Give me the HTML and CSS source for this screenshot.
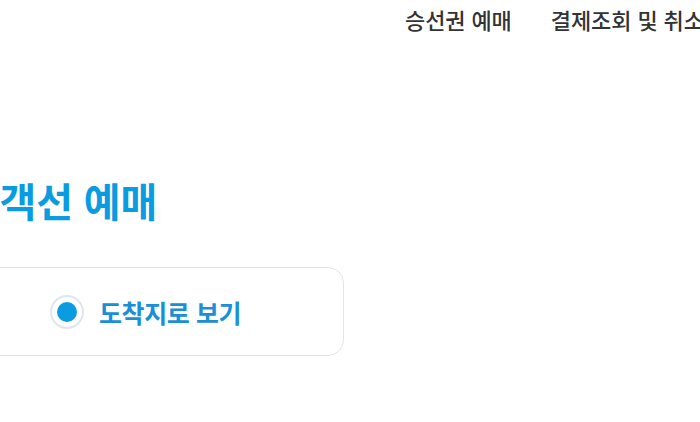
FILE: index.html
```html
<!DOCTYPE html>
<html lang="ko">
<head>
  <meta charset="UTF-8">
  <meta name="viewport" content="width=device-width, initial-scale=1.0">
  <title>여객선 예매</title>
  <link rel="stylesheet" href="styles.css">
</head>
<body>
  <header class="top">
    <nav class="gnb">
      <a href="#">승선권 예매</a>
      <a href="#">결제조회 및 취소</a>
    </nav>
  </header>

  <main class="content">
    <h1 class="title">여객선 예매</h1>

    <div class="view-box">
      <label class="radio">
        <input type="radio" name="view" checked>
        <span class="dot"></span>
        <span class="label">도착지로 보기</span>
      </label>
    </div>
  </main>
</body>
</html>
```

FILE: styles.css
```css
body { margin: 0; padding: 0; background: #fff; font-family: "Noto Sans CJK KR", "Noto Sans", sans-serif; overflow: hidden; }
a { text-decoration: none; }

.top { height: 38px; display: flex; align-items: center; white-space: nowrap; }
.gnb { display: flex; gap: 39px; margin-left: 405px; }
.gnb a { color: #333; font-size: 22px; font-weight: 500; letter-spacing: -0.1px; }

.content { padding-top: 138px; }
.title { margin: 0 0 0 -37px; color: #0a9be0; font-size: 40px; font-weight: 700; letter-spacing: -0.2px; line-height: 48px; white-space: nowrap; }

.view-box { width: 402px; height: 89px; margin: 43px 0 0 -58px; box-sizing: border-box; border: 1.5px solid #dfe5f0; border-radius: 16px; display: flex; align-items: center; padding-left: 107px; }
.radio { display: flex; align-items: center; gap: 15px; cursor: pointer; }
.radio input { display: none; }
.dot { width: 34px; height: 34px; box-sizing: border-box; border: 2px solid #dfe5f0; border-radius: 50%; display: flex; align-items: center; justify-content: center; }
.dot::after { content: ""; width: 20px; height: 20px; border-radius: 50%; background: #0a9be0; }
.label { color: #1a8fd8; font-size: 25px; font-weight: 700; letter-spacing: -0.4px; }
```
